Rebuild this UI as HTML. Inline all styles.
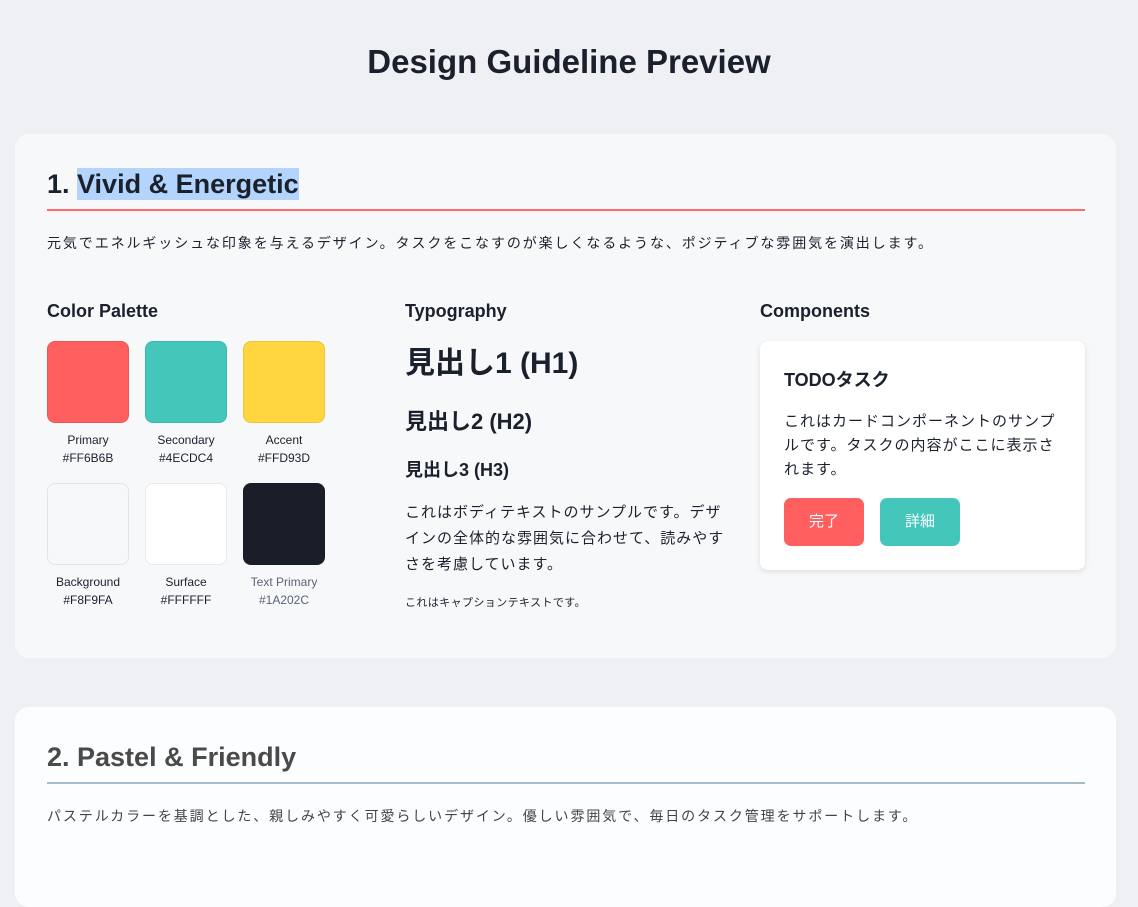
<!DOCTYPE html>
<html><head><meta charset="utf-8"><style>
*{margin:0;padding:0;box-sizing:border-box}
body{width:1138px;height:838px;overflow:hidden;background:#eef0f3;font-family:"Liberation Sans","Noto Sans CJK JP",sans-serif;color:#1a202c;position:relative}
.a{position:absolute;white-space:nowrap}
h1{position:absolute;left:0;width:1138px;text-align:center;top:41px;font-size:33px;font-weight:bold;line-height:42px}
.card{position:absolute;left:15px;width:1101px;border-radius:14px}
.sw{position:absolute;width:82px;height:82px;border-radius:8px;border:1px solid rgba(0,0,0,0.08)}
.lb{position:absolute;width:100px;text-align:center;font-size:12px;line-height:18px;color:#1a202c}
.btn{position:absolute;top:157px;width:80px;height:48px;border-radius:7px;color:#fff;font-size:15px;text-align:center;line-height:48px}
</style></head><body>
<h1>Design Guideline Preview</h1>
<div class="card" style="top:134px;height:524px;background:#f7f8fa">
  <div class="a" style="left:32px;top:33px;font-size:27px;line-height:34px;font-weight:bold">1. <span style="background:#b3d4fc;padding:1px 0">Vivid &amp; Energetic</span></div>
  <div class="a" style="left:32px;top:75px;width:1038px;height:2px;background:#ff6b6b"></div>
  <div class="a" style="left:32px;top:99px;font-size:14px;letter-spacing:1.9px;line-height:20px">元気でエネルギッシュな印象を与えるデザイン。タスクをこなすのが楽しくなるような、ポジティブな雰囲気を演出します。</div>
  <div class="a" style="left:32px;top:165px;font-size:18px;font-weight:bold;line-height:24px">Color Palette</div>
  <div class="sw" style="left:32px;top:207px;background:#ff5f5f"></div>
  <div class="sw" style="left:130px;top:207px;background:#45c6bb"></div>
  <div class="sw" style="left:228px;top:207px;background:#ffd63f"></div>
  <div class="lb" style="left:23px;top:297px">Primary<br>#FF6B6B</div>
  <div class="lb" style="left:121px;top:297px">Secondary<br>#4ECDC4</div>
  <div class="lb" style="left:219px;top:297px">Accent<br>#FFD93D</div>
  <div class="sw" style="left:32px;top:349px;background:#f7f8fa"></div>
  <div class="sw" style="left:130px;top:349px;background:#fff"></div>
  <div class="sw" style="left:228px;top:349px;background:#1a1e28"></div>
  <div class="lb" style="left:23px;top:439px">Background<br>#F8F9FA</div>
  <div class="lb" style="left:121px;top:439px">Surface<br>#FFFFFF</div>
  <div class="lb" style="left:219px;top:439px;color:#5a6478">Text Primary<br>#1A202C</div>

  <div class="a" style="left:390px;top:165px;font-size:18px;font-weight:bold;line-height:24px">Typography</div>
  <div class="a" style="left:390px;top:210px;font-size:30px;font-weight:bold;line-height:40px">見出し1 (H1)</div>
  <div class="a" style="left:390px;top:273px;font-size:22px;font-weight:bold;line-height:30px">見出し2 (H2)</div>
  <div class="a" style="left:390px;top:324px;font-size:18px;font-weight:bold;line-height:24px">見出し3 (H3)</div>
  <div class="a" style="left:390px;top:366px;font-size:15px;letter-spacing:1px;line-height:26px;white-space:normal;width:325px">これはボディテキストのサンプルです。デザインの全体的な雰囲気に合わせて、読みやすさを考慮しています。</div>
  <div class="a" style="left:390px;top:461px;font-size:11px;letter-spacing:0.4px;line-height:16px">これはキャプションテキストです。</div>

  <div class="a" style="left:745px;top:165px;font-size:18px;font-weight:bold;line-height:24px">Components</div>
  <div class="a" style="left:745px;top:207px;width:325px;height:229px;background:#fff;border-radius:8px;box-shadow:0 2px 6px rgba(0,0,0,0.1)">
    <div class="a" style="left:24px;top:27px;font-size:18px;font-weight:bold;line-height:24px">TODOタスク</div>
    <div class="a" style="left:24px;top:69px;width:276px;white-space:normal;font-size:15px;letter-spacing:1px;line-height:24px">これはカードコンポーネントのサンプルです。タスクの内容がここに表示されます。</div>
    <div class="btn" style="left:24px;background:#ff5f5f">完了</div>
    <div class="btn" style="left:120px;background:#45c6bb">詳細</div>
  </div>
</div>
<div class="card" style="top:707px;height:200px;background:#fcfdfe">
  <div class="a" style="left:32px;top:33px;font-size:27px;line-height:34px;font-weight:bold;color:#4a4a4a">2. Pastel &amp; Friendly</div>
  <div class="a" style="left:32px;top:75px;width:1038px;height:2px;background:#a3bccf"></div>
  <div class="a" style="left:32px;top:99px;font-size:14px;letter-spacing:1.9px;line-height:20px;color:#444">パステルカラーを基調とした、親しみやすく可愛らしいデザイン。優しい雰囲気で、毎日のタスク管理をサポートします。</div>
</div>
</body></html>
